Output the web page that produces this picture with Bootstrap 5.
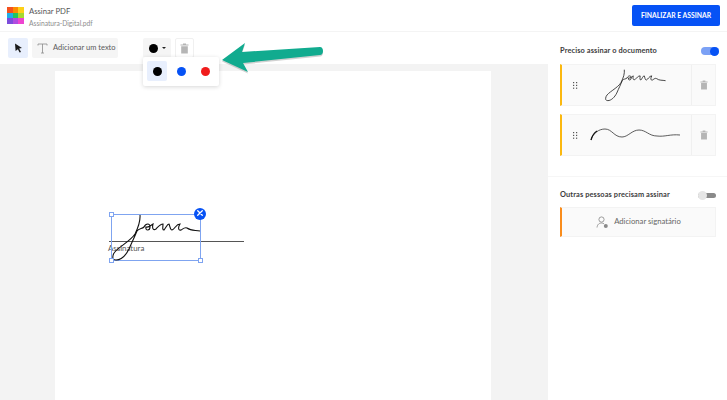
<!DOCTYPE html><html lang="en">
<head>
  <meta charset="UTF-8">
  <title>Assinar PDF</title>
  <meta name="viewport" content="width=device-width, initial-scale=1">
  <link href="https://cdn.jsdelivr.net/npm/bootstrap@5.3.2/dist/css/bootstrap.min.css" rel="stylesheet">
  <style>
    html, body { height: 400px; overflow: hidden; }
    body { font-family: Lato, sans-serif; color: #4a4a4a; background: #fff; font-size: 8px; }
    .app-shell { width: 727px; height: 400px; position: relative; overflow: hidden; }
    .top-bar { height: 32px; border-bottom: 1px solid #f4f4f4; padding: 0 7px 0 7px; }
    .logo-box { width: 17px; height: 17px; margin-right: 5px; line-height: 0; }
    .title-main { font-size: 7.7px; line-height: 11px; color: #555; margin-top: 2px; }
    .title-file { font-size: 6.7px; line-height: 10px; color: #8d8d8d; margin-top: 1px; }
    .finish-btn { width: 88px; height: 21px; background: #0652f5; color: #fff; font-size: 6.8px; font-weight: 700; border-radius: 2px; border: 0; padding: 0; font-family: Lato, sans-serif; }
    .main-area { width: 727px; height: 368px; }
    .left-pane { width: 548px; height: 368px; }
    .tool-bar { height: 32px; padding: 6px 0 0 8px; }
    .tool-btn { height: 20px; border-radius: 2px; background: #f5f5f5; }
    .tool-arrow { width: 20px; background: #e8effd; }
    .tool-text { width: 86px; margin-left: 4px; font-size: 7.5px; color: #5a5a5a; padding-left: 5px; gap: 5px; white-space: nowrap; }
    .tool-text svg { flex-shrink: 0; }
    .tool-color { width: 28px; margin-left: 25px; gap: 4px; }
    .tool-trash { width: 19px; margin-left: 4px; background: #fff; border: 1px solid #f0f0f0; }
    .dot-black, .dot-blue, .dot-red { display: inline-block; border-radius: 50%; width: 9px; height: 9px; }
    .dot-black { background: #000; }
    .dot-blue { background: #0652f5; }
    .dot-red { background: #f01c1c; }
    .caret-mini { width: 0; height: 0; border-left: 2px solid transparent; border-right: 2px solid transparent; border-top: 2px solid #222; }
    .work-area { height: 336px; background: #f3f3f3; padding: 7px 0 0 55px; }
    .pdf-page { width: 436px; height: 329px; background: #fff; position: relative; }
    .sign-line { position: absolute; left: 54px; top: 170px; width: 135px; height: 1px; background: #555; }
    .sign-label { position: absolute; left: 53px; top: 171px; font-size: 7.9px; line-height: 13px; color: #555; }
    .sign-box { position: absolute; left: 56px; top: 143px; width: 90px; height: 47px; border: 1px solid #7fa4f0; }
    .sign-box svg { position: absolute; left: 0; top: -1px; }
    .handle { position: absolute; width: 5px; height: 5px; background: #fff; border: 1px solid #7fa4f0; }
    .handle-tl { left: -3px; top: -3px; }
    .handle-bl { left: -3px; bottom: -3px; }
    .handle-br { right: -3px; bottom: -3px; }
    .close-dot { position: absolute; right: -6px; top: -7px; width: 12px; height: 12px; border-radius: 50%; background: #0652f5; line-height: 0; }
    .color-menu { position: absolute; left: 143px; top: 57px; width: 76px; height: 29px; background: #fff; box-shadow: 0 1px 4px rgba(0,0,0,.16); border-radius: 2px; padding: 4px 0 0 4px; z-index: 5; }
    .color-opt { width: 20px; height: 20px; border-radius: 2px; margin-right: 4px; }
    .color-opt.picked { background: #e8effd; }
    .big-arrow { position: absolute; left: 218px; top: 40px; z-index: 6; }
    .side-pane { width: 179px; height: 368px; padding-top: 14px; }
    .side-head { padding: 0 8px 0 12px; height: 10px; margin-bottom: 8px; font-size: 7.4px; font-weight: 700; color: #3c3c3c; letter-spacing: .12px; }
    .switch-on, .switch-off { width: 18px; height: 8px; position: relative; border-radius: 4px; }
    .switch-on { background: #7ba1f5; }
    .switch-on::after { content: ""; position: absolute; right: 0; top: -0.5px; width: 9px; height: 9px; border-radius: 50%; background: #0652f5; }
    .switch-off { background: #8a8a8a; height: 5px; }
    .switch-off::after { content: ""; position: absolute; left: 0; top: -2px; width: 9px; height: 9px; border-radius: 50%; background: #e6e6e6; }
    .sign-card { width: 156px; height: 42px; margin: 0 0 8px 12px; background: #fafafa; border: 1px solid #f3f3f3; border-left: 2px solid #fbb80f; }
    .grip-col { width: 18px; padding-left: 11px; }
    .grip-col svg { display: block; }
    .sign-col { flex: 1; }
    .trash-col { width: 24px; border-left: 1px solid #f0f0f0; }
    .side-split { border-top: 1px solid #f6f6f6; margin: 20px 0 0 0; height: 14px; }
    .other-head { margin-bottom: 7px; padding-right: 11px; }
    .add-card { width: 156px; height: 30px; margin-left: 12px; background: #fafafa; border: 1px solid #f3f3f3; border-left: 2px solid #f98c1c; font-size: 7.7px; color: #666; gap: 5px; }
  </style>
</head>
<body>
<div class="app-shell">
  <div class="top-bar d-flex align-items-center justify-content-between">
    <div class="d-flex align-items-center">
      <div class="logo-box">
        <svg width="17" height="17" viewBox="0 0 17 17">
          <rect width="6" height="6" fill="#f4511e"/><rect x="6" width="6" height="6" fill="#fb8c00"/><rect x="11" width="6" height="6" fill="#fdd017"/>
          <rect y="6" width="6" height="6" fill="#1eaee8"/><rect x="6" y="6" width="6" height="6" fill="#22c55e"/><rect x="11" y="6" width="6" height="6" fill="#a5d92f"/>
          <rect y="11" width="6" height="6" fill="#7c4ddb"/><rect x="6" y="11" width="6" height="6" fill="#b04be0"/><rect x="11" y="11" width="6" height="6" fill="#ee44d0"/>
        </svg>
      </div>
      <div>
        <div class="title-main">Assinar PDF</div>
        <div class="title-file">Assinatura-Digital.pdf</div>
      </div>
    </div>
    <button class="finish-btn" type="button">FINALIZAR E ASSINAR</button>
  </div>

  <div class="main-area d-flex">
    <div class="left-pane">
      <div class="tool-bar d-flex">
        <div class="tool-btn tool-arrow d-flex align-items-center justify-content-center">
          <svg width="9" height="10" viewBox="0 0 9 10"><path d="M1 0.5 L8 5 L5.2 5.6 L7 9 L5.6 9.6 L3.9 6.3 L1.6 8 Z" fill="#1a1a1a"/></svg>
        </div>
        <div class="tool-btn tool-text d-flex align-items-center">
          <svg width="11" height="11" viewBox="0 0 11 11"><path d="M1 2.5 V1 H10 V2.5 M5.5 1 V10 M4 10 H7" fill="none" stroke="#8a8a8a" stroke-width=".8"/></svg>
          <span>Adicionar um texto</span>
        </div>
        <div class="tool-btn tool-color d-flex align-items-center justify-content-center">
          <span class="dot-black"></span><span class="caret-mini"></span>
        </div>
        <div class="tool-btn tool-trash d-flex align-items-center justify-content-center">
          <svg width="9" height="11" viewBox="0 0 9 11"><path d="M3 1.5 V.5 H6 V1.5 H8.5 V2.6 H.5 V1.5 Z M1.2 3.2 H7.8 V10.5 H1.2 Z" fill="#b5b5b5"/></svg>
        </div>
      </div>
      <div class="work-area">
        <div class="pdf-page">
          <div class="sign-line"></div>
          <div class="sign-label">Assinatura</div>
          <div class="sign-box">
            <svg width="90" height="48" viewBox="0 0 90 48">
              <path d="M28 1 C28.5 7 27 12 23 20 C18 28 4 34 1.5 40 C0 44 1 46 4 46 C9 46 14 41 17 35 C20 28 23 22 25 17 C27 14 30 15 32 13 C34 9 38 9 38 13 C38 17 33 17 34 13 C37 14 39 11 41 10 C40 14 41 17 44 15 C46 13 48 10 51 10 C51 13 50 16 52 16 C54 14 55 10 57 10 C58 12 58 16 60 16 C63 15 64 10 68 10 C66 13 66 17 69 16 C72 14 73 13 75 14 C79 17 83 16 88 17" fill="none" stroke="#111" stroke-width="1.1"/>
            </svg>
            <span class="handle handle-tl"></span>
            <span class="handle handle-bl"></span>
            <span class="handle handle-br"></span>
            <span class="close-dot">
              <svg width="12" height="12" viewBox="0 0 12 12"><path d="M3.7 3.7 L8.3 8.3 M8.3 3.7 L3.7 8.3" stroke="#fff" stroke-width="1.3" stroke-linecap="round"/></svg>
            </span>
          </div>
        </div>
      </div>
    </div>

    <div class="side-pane">
      <div class="side-head d-flex align-items-center justify-content-between">
        <span>Preciso assinar o documento</span>
        <span class="switch-on"></span>
      </div>
      <div class="sign-card d-flex">
        <div class="grip-col d-flex align-items-center">
          <svg width="5" height="7" viewBox="0 0 5 7" fill="#555"><rect width="1.2" height="1.2"/><rect x="3" width="1.2" height="1.2"/><rect y="2.8" width="1.2" height="1.2"/><rect x="3" y="2.8" width="1.2" height="1.2"/><rect y="5.6" width="1.2" height="1.2"/><rect x="3" y="5.6" width="1.2" height="1.2"/></svg>
        </div>
        <div class="sign-col d-flex align-items-center justify-content-center">
          <svg width="62" height="33" viewBox="0 0 90 48">
            <path d="M28 1 C28.5 7 27 12 23 20 C18 28 4 34 1.5 40 C0 44 1 46 4 46 C9 46 14 41 17 35 C20 28 23 22 25 17 C27 14 30 15 32 13 C34 9 38 9 38 13 C38 17 33 17 34 13 C37 14 39 11 41 10 C40 14 41 17 44 15 C46 13 48 10 51 10 C51 13 50 16 52 16 C54 14 55 10 57 10 C58 12 58 16 60 16 C63 15 64 10 68 10 C66 13 66 17 69 16 C72 14 73 13 75 14 C79 17 83 16 88 17" fill="none" stroke="#222" stroke-width="1.2"/>
          </svg>
        </div>
        <div class="trash-col d-flex align-items-center justify-content-center">
          <svg width="8" height="10" viewBox="0 0 9 11"><path d="M3 1.5 V.5 H6 V1.5 H8.5 V2.6 H.5 V1.5 Z M1.2 3.2 H7.8 V10.5 H1.2 Z" fill="#b5b5b5"/></svg>
        </div>
      </div>
      <div class="sign-card d-flex">
        <div class="grip-col d-flex align-items-center">
          <svg width="5" height="7" viewBox="0 0 5 7" fill="#555"><rect width="1.2" height="1.2"/><rect x="3" width="1.2" height="1.2"/><rect y="2.8" width="1.2" height="1.2"/><rect x="3" y="2.8" width="1.2" height="1.2"/><rect y="5.6" width="1.2" height="1.2"/><rect x="3" y="5.6" width="1.2" height="1.2"/></svg>
        </div>
        <div class="sign-col d-flex align-items-center justify-content-center">
          <svg width="92" height="20" viewBox="0 0 92 20">
            <path d="M1 15 C3 8 9 4 15 4 C22 4 24 12 32 12 C38 12 42 5 49 5 C56 5 59 11 67 11 C75 12 80 9 90 10" fill="none" stroke="#333" stroke-width=".8"/>
            <path d="M1 15 C2 11 4 8 7 6" fill="none" stroke="#111" stroke-width="1.2"/>
          </svg>
        </div>
        <div class="trash-col d-flex align-items-center justify-content-center">
          <svg width="8" height="10" viewBox="0 0 9 11"><path d="M3 1.5 V.5 H6 V1.5 H8.5 V2.6 H.5 V1.5 Z M1.2 3.2 H7.8 V10.5 H1.2 Z" fill="#b5b5b5"/></svg>
        </div>
      </div>
      <div class="side-split"></div>
      <div class="side-head other-head d-flex align-items-center justify-content-between">
        <span>Outras pessoas precisam assinar</span>
        <span class="switch-off"></span>
      </div>
      <div class="add-card d-flex align-items-center justify-content-center">
        <svg width="13" height="13" viewBox="0 0 13 13"><circle cx="5.5" cy="3.5" r="2.6" fill="none" stroke="#777" stroke-width=".7"/><path d="M1 11.5 C1.5 8 3.5 7 5.5 7 C6.5 7 7.2 7.3 8 7.8" fill="none" stroke="#777" stroke-width=".7"/><circle cx="9.8" cy="10" r="2" fill="#8a8a8a"/></svg>
        <span>Adicionar signatário</span>
      </div>
    </div>
  </div>

  <div class="color-menu d-flex">
    <div class="color-opt picked d-flex align-items-center justify-content-center"><span class="dot-black"></span></div>
    <div class="color-opt d-flex align-items-center justify-content-center"><span class="dot-blue"></span></div>
    <div class="color-opt d-flex align-items-center justify-content-center"><span class="dot-red"></span></div>
  </div>

  <svg class="big-arrow" width="110" height="36" viewBox="0 0 110 36">
    <path d="M4 20 L27 3 L24 12 L102 7 C106 7 106 15 102 15 L25 23 L30 32 Z" fill="#9a9a9a" opacity=".45" transform="translate(0 1.5)"/>
    <path d="M4 20 L27 3 L24 12 L102 7 C106 7 106 15 102 15 L25 23 L30 32 Z" fill="#11ab8f"/>
  </svg>
</div>
<script src="https://cdn.jsdelivr.net/npm/bootstrap@5.3.2/dist/js/bootstrap.bundle.min.js"></script>
</body>
</html>
